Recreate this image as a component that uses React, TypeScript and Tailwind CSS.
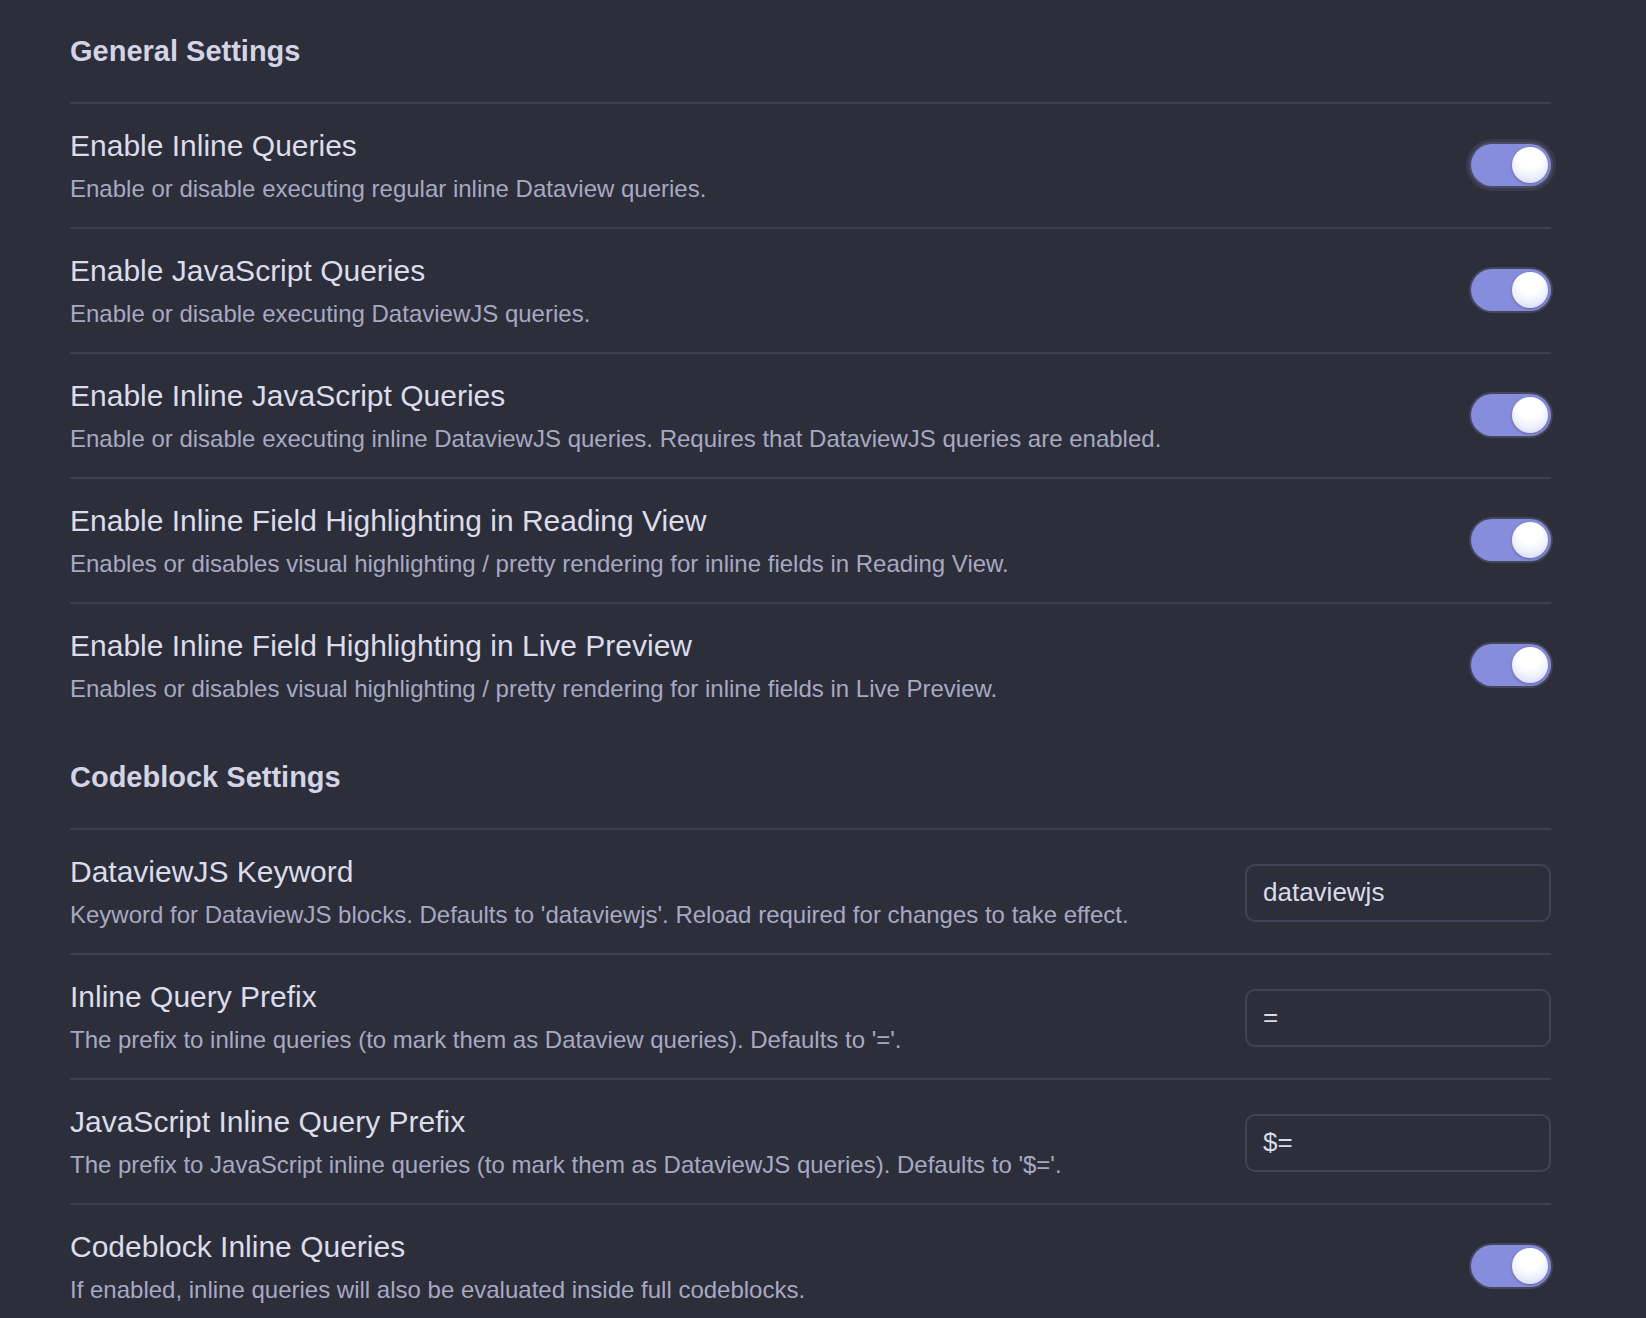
import React from 'react';

type Item = {
  name: string;
  desc: string;
  kind: 'toggle' | 'text';
  value?: string;
  focused?: boolean;
};

const general: Item[] = [
  {
    name: 'Enable Inline Queries',
    desc: 'Enable or disable executing regular inline Dataview queries.',
    kind: 'toggle',
    focused: true,
  },
  {
    name: 'Enable JavaScript Queries',
    desc: 'Enable or disable executing DataviewJS queries.',
    kind: 'toggle',
  },
  {
    name: 'Enable Inline JavaScript Queries',
    desc: 'Enable or disable executing inline DataviewJS queries. Requires that DataviewJS queries are enabled.',
    kind: 'toggle',
  },
  {
    name: 'Enable Inline Field Highlighting in Reading View',
    desc: 'Enables or disables visual highlighting / pretty rendering for inline fields in Reading View.',
    kind: 'toggle',
  },
  {
    name: 'Enable Inline Field Highlighting in Live Preview',
    desc: 'Enables or disables visual highlighting / pretty rendering for inline fields in Live Preview.',
    kind: 'toggle',
  },
];

const codeblock: Item[] = [
  {
    name: 'DataviewJS Keyword',
    desc: "Keyword for DataviewJS blocks. Defaults to 'dataviewjs'. Reload required for changes to take effect.",
    kind: 'text',
    value: 'dataviewjs',
  },
  {
    name: 'Inline Query Prefix',
    desc: "The prefix to inline queries (to mark them as Dataview queries). Defaults to '='.",
    kind: 'text',
    value: '=',
  },
  {
    name: 'JavaScript Inline Query Prefix',
    desc: "The prefix to JavaScript inline queries (to mark them as DataviewJS queries). Defaults to '$='.",
    kind: 'text',
    value: '$=',
  },
  {
    name: 'Codeblock Inline Queries',
    desc: 'If enabled, inline queries will also be evaluated inside full codeblocks.',
    kind: 'toggle',
  },
];

const Toggle: React.FC<{ focused?: boolean }> = ({ focused }) => (
  <div
    className={`relative -mt-[3px] w-[80px] h-[42px] rounded-full bg-[#878ddd] shrink-0 ${
      focused
        ? 'shadow-[0_0_0_2px_#4a4c63,0_0_0_5px_rgba(74,76,99,0.45)]'
        : 'shadow-[0_0_0_2px_#44465c]'
    }`}
  >
    <div className="absolute right-[3px] top-[3px] w-[36px] h-[36px] rounded-full bg-[radial-gradient(circle_at_50%_30%,#ffffff_35%,#eceefc_65%,#c6c9f0_100%)] shadow-[0_1px_3px_rgba(20,20,40,0.35)]" />
  </div>
);

const TextInput: React.FC<{ value: string }> = ({ value }) => (
  <input
    type="text"
    defaultValue={value}
    className="w-[306px] h-[58px] shrink-0 rounded-[10px] border-2 border-[#414355] bg-[#2c2e3a] px-[16px] text-[26px] text-[#dadbea] outline-none font-['Liberation_Sans',Arial,sans-serif]"
  />
);

const SettingRow: React.FC<{ item: Item }> = ({ item }) => (
  <div className="flex items-center gap-8 border-t-2 border-[#3d3f4f] pt-[22px] pb-[20px]">
    <div className="flex-1 min-w-0">
      <div className="text-[30px] leading-[39px] text-[#dbdcec]">{item.name}</div>
      <div className="mt-[6px] text-[24px] leading-[36px] text-[#a7a9c3]">{item.desc}</div>
    </div>
    {item.kind === 'toggle' ? <Toggle focused={item.focused} /> : <TextInput value={item.value ?? ''} />}
  </div>
);

const Heading: React.FC<{ title: string }> = ({ title }) => (
  <h3 className="pt-[31px] pb-[31px] text-[29px] leading-[39px] font-bold text-[#d3d4e6]">{title}</h3>
);

export default function App() {
  return (
    <div className="min-h-screen w-full bg-[#2c2e3a] pl-[70px] pr-[95px] pt-px font-['Liberation_Sans',Arial,sans-serif]">
      <Heading title="General Settings" />
      {general.map((item) => (
        <SettingRow key={item.name} item={item} />
      ))}
      <Heading title="Codeblock Settings" />
      {codeblock.map((item) => (
        <SettingRow key={item.name} item={item} />
      ))}
    </div>
  );
}
